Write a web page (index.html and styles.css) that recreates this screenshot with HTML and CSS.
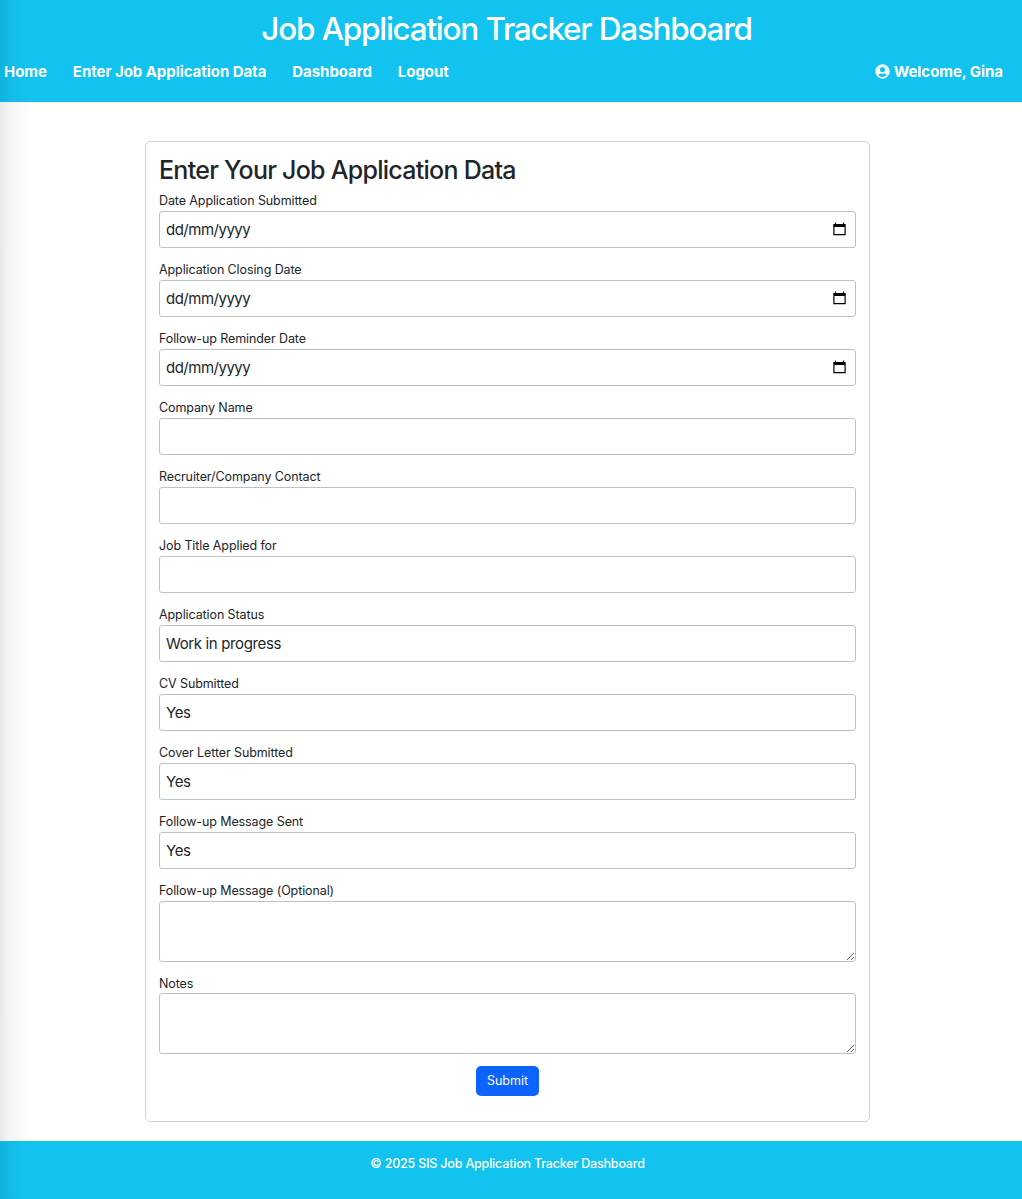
FILE: index.html
```html
<!DOCTYPE html>
<html lang="en">
<head>
<meta charset="utf-8">
<title>Job Application Tracker Dashboard</title>
<link rel="stylesheet" href="styles.css">
</head>
<body>
<div class="page">
<header class="header">
  <h1 class="title"><span>Job Application Tracker Dashboard</span></h1>
  <nav class="nav">
    <a class="nav-home">Home</a>
    <a class="nav-enter">Enter Job Application Data</a>
    <a class="nav-dash">Dashboard</a>
    <a class="nav-logout">Logout</a>
    <span class="user"><svg class="user-icon" viewBox="0 0 16 16"><path fill="#fff" fill-rule="evenodd" d="M8 .3a7.700 7.700 0 1 0 0 15.400A7.700 7.700 0 0 0 8 .3zM8 3.300a2.700 2.700 0 1 1 0 5.400 2.700 2.700 0 0 1 0-5.400zM8 13.800a5.800 5.800 0 0 1-4.500-2.100c.7-1.100 1.400-1.700 2.500-1.700.6 0 1 .3 2 .3s1.400-.3 2-.3c1.100 0 1.800.6 2.500 1.700A5.800 5.800 0 0 1 8 13.800z"/></svg><span class="welcome">Welcome, Gina</span></span>
  </nav>
</header>
<main class="main">
  <form class="card">
    <h2 class="heading"><span>Enter Your Job Application Data</span></h2>
    <div class="field"><label>Date Application Submitted</label><div class="control date"><span>dd/mm/yyyy</span><svg class="calendar" viewBox="0 0 13 14"><path d="M2 .5h1V2h7V.5h1V2h1.700v11.200H.3V2H2zM1.500 5v7h10V5z" fill-rule="evenodd"/></svg></div></div>
    <div class="field"><label>Application Closing Date</label><div class="control date"><span>dd/mm/yyyy</span><svg class="calendar" viewBox="0 0 13 14"><path d="M2 .5h1V2h7V.5h1V2h1.700v11.200H.3V2H2zM1.500 5v7h10V5z" fill-rule="evenodd"/></svg></div></div>
    <div class="field"><label>Follow-up Reminder Date</label><div class="control date"><span>dd/mm/yyyy</span><svg class="calendar" viewBox="0 0 13 14"><path d="M2 .5h1V2h7V.5h1V2h1.700v11.200H.3V2H2zM1.500 5v7h10V5z" fill-rule="evenodd"/></svg></div></div>
    <div class="field"><label>Company Name</label><input class="control" type="text"></div>
    <div class="field"><label>Recruiter/Company Contact</label><input class="control" type="text"></div>
    <div class="field"><label>Job Title Applied for</label><input class="control" type="text"></div>
    <div class="field"><label>Application Status</label><div class="control"><span>Work in progress</span></div></div>
    <div class="field"><label>CV Submitted</label><div class="control"><span>Yes</span></div></div>
    <div class="field"><label>Cover Letter Submitted</label><div class="control"><span>Yes</span></div></div>
    <div class="field"><label>Follow-up Message Sent</label><div class="control"><span>Yes</span></div></div>
    <div class="field message"><label>Follow-up Message (Optional)</label><textarea class="control area"></textarea></div>
    <div class="field notes"><label>Notes</label><textarea class="control area"></textarea></div>
    <button class="submit" type="button">Submit</button>
  </form>
</main>
<footer class="footer"><span>© 2025 SIS Job Application Tracker Dashboard</span></footer>
<div class="edge-shade"></div>
</div>
</body>
</html>
```
FILE: styles.css
```css
* { box-sizing: border-box; }
body {
  margin: 0;
  background: #fff;
  color: #212529;
  font-family: Inter, "Liberation Sans", sans-serif;
}
.page {
  position: relative;
  display: flex;
  flex-direction: column;
  height: 1199px;
}
.header {
  height: 102px;
  padding: 9px 19px 0 4px;
  background: #12c3f0;
  color: #fff;
}
.title {
  margin: 0;
  padding-left: 6px;
  text-align: center;
  font-size: 31.5px;
  line-height: 40px;
  font-weight: 530;
  letter-spacing: -1.27px;
  word-spacing: 0.5px;
}
.nav {
  display: flex;
  align-items: center;
  gap: 26px;
  margin-top: 11px;
  font-size: 15px;
  line-height: 24px;
  font-weight: 750;
  letter-spacing: -0.05px;
  white-space: nowrap;
}
.user {
  display: flex;
  align-items: center;
  gap: 4px;
  margin-left: auto;
}
.user-icon { width: 15px; height: 15px; margin-bottom: 2px; }
.main {
  flex: 1;
  padding: 39px 152px 0 145px;
}
.card {
  display: flex;
  flex-direction: column;
  height: 981px;
  padding: 12px 13px;
  border: 1px solid #cfd1d3;
  border-radius: 5px;
}
.heading {
  margin: 0;
  height: 37px;
  font-size: 25px;
  line-height: 32px;
  font-weight: 520;
  letter-spacing: -0.73px;
}
.field {
  display: flex;
  flex-direction: column;
  margin-bottom: 12px;
}
.field label {
  font-size: 12.5px;
  line-height: 20px;
  letter-spacing: -0.1px;
}
.control {
  display: flex;
  align-items: center;
  justify-content: space-between;
  width: 100%;
  height: 37px;
  margin: 0;
  padding: 0 9px 0 6px;
  background: #fff;
  border: 1px solid #bfc1c3;
  border-radius: 3px;
  outline: none;
  font-size: 15px;
  letter-spacing: -0.36px;
}
.date { letter-spacing: -0.5px; }
.calendar { width: 13px; height: 14px; margin-bottom: 1px; }
.area { height: 61px; resize: vertical; }
.notes label { line-height: 19px; }
.submit {
  align-self: center;
  width: 63px;
  height: 30px;
  padding: 0;
  border: 0;
  border-radius: 5px;
  background: #0d63fd;
  color: #fff;
  font: 400 12.5px/30px Inter, "Liberation Sans", sans-serif;
}
.footer {
  height: 58px;
  padding: 13px 7px 0 0;
  background: #12c3f0;
  color: #fff;
  text-align: center;
  font-size: 12.5px;
  font-weight: 450;
  line-height: 20px;
  letter-spacing: -0.19px;
}
.edge-shade {
  position: absolute;
  inset: 0 auto 0 0;
  width: 32px;
  background: linear-gradient(to right, rgba(0, 0, 0, .09), rgba(0, 0, 0, .04) 30%, rgba(0, 0, 0, .015) 65%, transparent);
}
```
